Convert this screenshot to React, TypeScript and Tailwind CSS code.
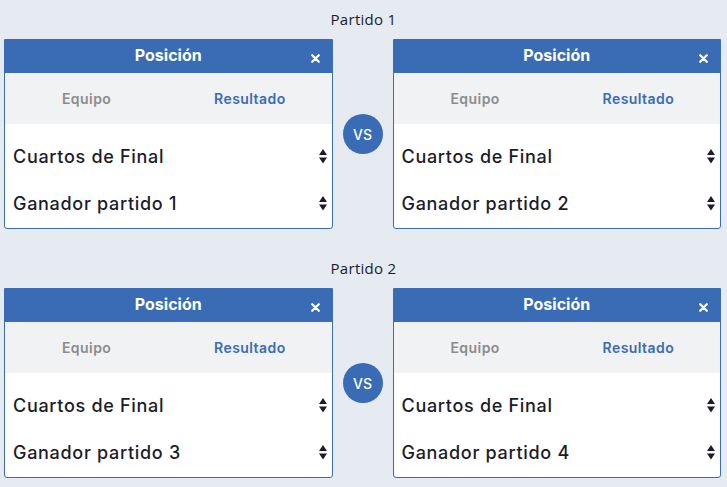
import React from "react";

const Arrows = () => (
  <svg width="8" height="15" viewBox="0 0 8 15" className="shrink-0">
    <path d="M4 0 L8 6 L0 6 Z" fill="#1c1d2b" />
    <path d="M0 8.5 L8 8.5 L4 14.5 Z" fill="#1c1d2b" />
  </svg>
);

const Card = ({ label }: { label: string }) => (
  <div className="flex-1 min-w-0 border border-[#3a6cb6] rounded-b-[3px] bg-white overflow-hidden">
    <div className="relative h-[33px] bg-[#3a6cb6] flex items-center justify-center">
      <span className="text-white font-bold text-[16px] leading-none -mt-[3px]" style={{ fontFamily: "Inter, 'Noto Sans', sans-serif" }}>
        Posición
      </span>
      <svg width="9" height="9" viewBox="0 0 9 9" className="absolute right-[12px] top-[14px]">
        <path d="M1.2 1.2 L7.8 7.8 M7.8 1.2 L1.2 7.8" stroke="white" strokeWidth="2.2" strokeLinecap="round" />
      </svg>
    </div>
    <div className="h-[51px] bg-[#f1f2f4] grid grid-cols-2 items-center text-[14px] font-semibold tracking-[0.45px]" style={{ fontFamily: "Inter, 'Noto Sans', sans-serif" }}>
      <div className="text-center text-[#8c8c8c]">Equipo</div>
      <div className="text-center text-[#3a6cb6]">Resultado</div>
    </div>
    <div className="pt-[9px] pb-[1px]" style={{ fontFamily: "Inter, 'Noto Sans', sans-serif" }}>
      <div className="h-[47px] flex items-center justify-between pl-[8px] pr-[5px] text-[18px] font-medium tracking-[0.7px] text-[#1b1c2a]">
        <span>Cuartos de Final</span>
        <Arrows />
      </div>
      <div className="h-[47px] flex items-center justify-between pl-[8px] pr-[5px] text-[18px] font-medium tracking-[0.7px] text-[#1b1c2a]">
        <span>{label}</span>
        <Arrows />
      </div>
    </div>
  </div>
);

const Match = ({ title, a, b }: { title: string; a: string; b: string }) => (
  <div className="pt-[9px] pb-[20px]">
    <div className="h-[20px] mb-[10px] flex items-center justify-center text-[15px] tracking-[0.3px] text-[#1b1c2a]" style={{ fontFamily: "'Open Sans', sans-serif" }}>
      {title}
    </div>
    <div className="flex items-center pl-[4px] pr-[6px]">
      <Card label={a} />
      <div className="w-[60px] shrink-0 flex items-center justify-center">
        <div className="w-[40px] h-[40px] rounded-full bg-[#3a6cb6] text-white flex items-center justify-center text-[14px] font-medium" style={{ fontFamily: "Inter, sans-serif" }}>
          VS
        </div>
      </div>
      <Card label={b} />
    </div>
  </div>
);

export default function App() {
  return (
    <div className="w-[727px] h-[487px] bg-[#e6eaf1] overflow-hidden">
      <Match title="Partido 1" a="Ganador partido 1" b="Ganador partido 2" />
      <Match title="Partido 2" a="Ganador partido 3" b="Ganador partido 4" />
    </div>
  );
}
